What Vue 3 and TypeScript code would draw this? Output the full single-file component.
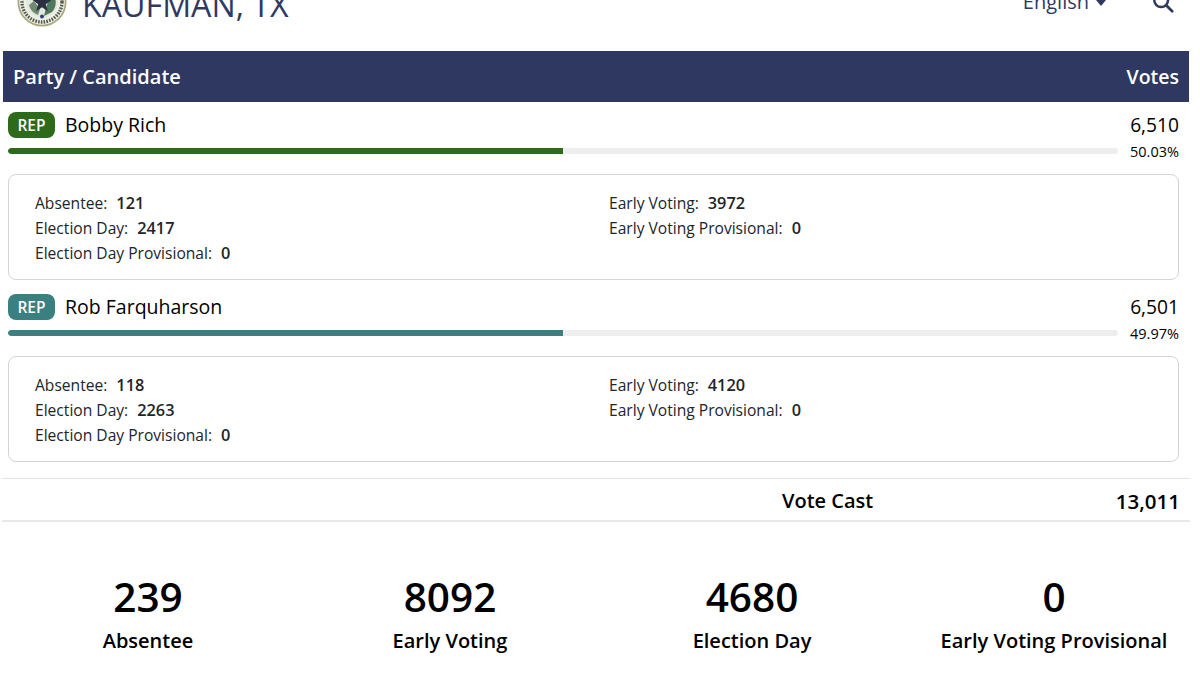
<script setup lang="ts">
interface Row { name: string; color: string; votes: string; pct: string; width: string; absentee: number; day: number; early: number }
const rows: Row[] = [
  { name: 'Bobby Rich', color: '#2d6a1a', votes: '6,510', pct: '50.03%', width: '50.03%', absentee: 121, day: 2417, early: 3972 },
  { name: 'Rob Farquharson', color: '#3b8080', votes: '6,501', pct: '49.97%', width: '49.97%', absentee: 118, day: 2263, early: 4120 },
]
const totals = [
  { n: '239', l: 'Absentee' },
  { n: '8092', l: 'Early Voting' },
  { n: '4680', l: 'Election Day' },
  { n: '0', l: 'Early Voting Provisional' },
]
</script>

<template>
  <div class="page">
    <header class="top">
      <div class="brand">
        <svg class="seal" viewBox="0 0 50 50" aria-hidden="true">
          <circle cx="25" cy="25" r="24.5" fill="#a9a77f" />
          <circle cx="25" cy="25" r="22.800" fill="#f1f0e4" />
          <circle cx="25" cy="25" r="20" fill="none" stroke="#4f5a50" stroke-width="3.400" stroke-dasharray="1.600 1.200" />
          <circle cx="25" cy="25" r="16" fill="#e4e7dc" />
          <path d="M34 15a14 14 0 0 1 1 20l-8 4 2-8z" fill="#4d7a5c" />
          <path d="M12 28a14 14 0 0 0 9 10l2-6-6-8z" fill="#6f8a72" />
          <path d="M25 16l2.400 6.800 7.100.2-5.700 4.300 2 6.900-5.800-4-5.800 4 2-6.900-5.700-4.300 7.100-.2z" fill="#2b3040" />
          <circle cx="25" cy="39.500" r="2" fill="#2c3f86" />
        </svg>
        <span class="county">KAUFMAN, TX</span>
      </div>
      <div class="tools">
        <span class="lang">English<i class="caret"></i></span>
        <svg class="search" viewBox="0 0 24 24" aria-hidden="true">
          <circle cx="10" cy="10" r="7.500" fill="none" stroke="#2f3a63" stroke-width="2.700" />
          <path d="M15.500 15.500L22 22" stroke="#2f3a63" stroke-width="3" stroke-linecap="round" />
        </svg>
      </div>
    </header>

    <div class="head"><span>Party / Candidate</span><span class="votes-head">Votes</span></div>

    <section v-for="r in rows" :key="r.name" class="cand">
      <div class="line">
        <div class="who">
          <span class="badge" :style="{ background: r.color }">REP</span>
          <span class="name">{{ r.name }}</span>
        </div>
        <span class="votes">{{ r.votes }}</span>
      </div>
      <div class="barline">
        <div class="track"><div class="fill" :style="{ width: r.width, background: r.color }"></div></div>
        <span class="pct">{{ r.pct }}</span>
      </div>
      <div class="card">
        <div class="col">
          <div>Absentee:<b>{{ r.absentee }}</b></div>
          <div>Election Day:<b>{{ r.day }}</b></div>
          <div>Election Day Provisional:<b>0</b></div>
        </div>
        <div class="col">
          <div>Early Voting:<b>{{ r.early }}</b></div>
          <div>Early Voting Provisional:<b>0</b></div>
        </div>
      </div>
    </section>

    <div class="cast">
      <span class="cast-label">Vote Cast</span>
      <span class="cast-num">13,011</span>
    </div>

    <div class="totals">
      <div v-for="t in totals" :key="t.l" class="total">
        <div class="num">{{ t.n }}</div>
        <div class="lab">{{ t.l }}</div>
      </div>
    </div>
  </div>
</template>

<style>
html, body { background: #fff; overflow: hidden; }
</style>

<style scoped>
.page {
  width: 1188px;
  margin: -20px 0 0 2px;
  font-family: "Open Sans", "Noto Sans", sans-serif;
  color: #000;
  height: 711px;
}
.top { display: flex; justify-content: space-between; height: 70.500px; }
.brand { display: flex; align-items: flex-start; padding-left: 15px; }
.seal { width: 50px; height: 50px; flex: none; margin-top: -3px; }
.county { margin-left: 15px; font-size: 32.200px; line-height: 40px; margin-top: 5px; color: #2f3a63; }
.tools { display: flex; align-items: flex-start; padding-right: 16px; color: #2f3a63; }
.lang { font-size: 20px; line-height: 24px; margin-top: 10px; }
.caret { display: inline-block; margin-left: 7px; vertical-align: 3px; border: 5.500px solid transparent; border-top: 6px solid #2f3a63; border-bottom: 0; }
.search { width: 22px; height: 22px; margin: 11px 0 0 46px; }
.head {
  display: flex; justify-content: space-between; align-items: center;
  height: 51.500px; margin: 0 1px; padding: 0 10px; box-sizing: border-box;
  background: #2e3860; color: #fff; font-size: 20px; font-weight: 600;
}
.votes-head { font-size: 19.500px; }
.cand { padding: 0 11px 0 6px; }
.line { display: flex; justify-content: space-between; align-items: center; height: 46px; }
.who { display: flex; align-items: center; }
.badge {
  width: 47px; height: 26px; border-radius: 8px; color: #fff;
  font-size: 15.500px; font-weight: 600; text-align: center; line-height: 26px;
}
.name { margin-left: 10px; font-size: 19.500px; margin-top: -1px; }
.votes { font-size: 19.200px; margin-top: -1px; }
.barline { display: flex; align-items: flex-start; gap: 12px; height: 26px; }
.track { flex: 1; height: 6px; border-radius: 3px; background: #eee; overflow: hidden; }
.fill { height: 100%; border-radius: 3px 0 0 3px; }
.pct { font-size: 14.500px; line-height: 20px; margin-top: -6px; }
.card {
  display: grid; grid-template-columns: 574px 1fr;
  height: 106px; box-sizing: border-box; padding: 16px 26px;
  border: 1px solid #d4d4d4; border-radius: 8px;
  font-size: 15.600px; line-height: 25px; color: #212529;
}
.card b { margin-left: 9px; font-size: 16.300px; font-weight: 600; }
.cand + .cand { margin-top: 4px; }
.cast {
  display: flex; align-items: center; height: 39px;
  margin-top: 16px; padding: 2px 10px 0;
  border-top: 1px solid #e4e4e4; border-bottom: 2px solid #e8e8e8;
  font-size: 20px; font-weight: 600;
}
.cast-label { margin-left: 770px; }
.cast-num { margin-left: auto; font-size: 20.500px; }
.totals { display: grid; grid-template-columns: repeat(4, 302px); margin: 47px 0 0 -5px; text-align: center; }
.num { font-size: 40.500px; line-height: 56px; font-weight: 600; }
.lab { font-size: 20px; line-height: 32px; font-weight: 600; }
</style>
